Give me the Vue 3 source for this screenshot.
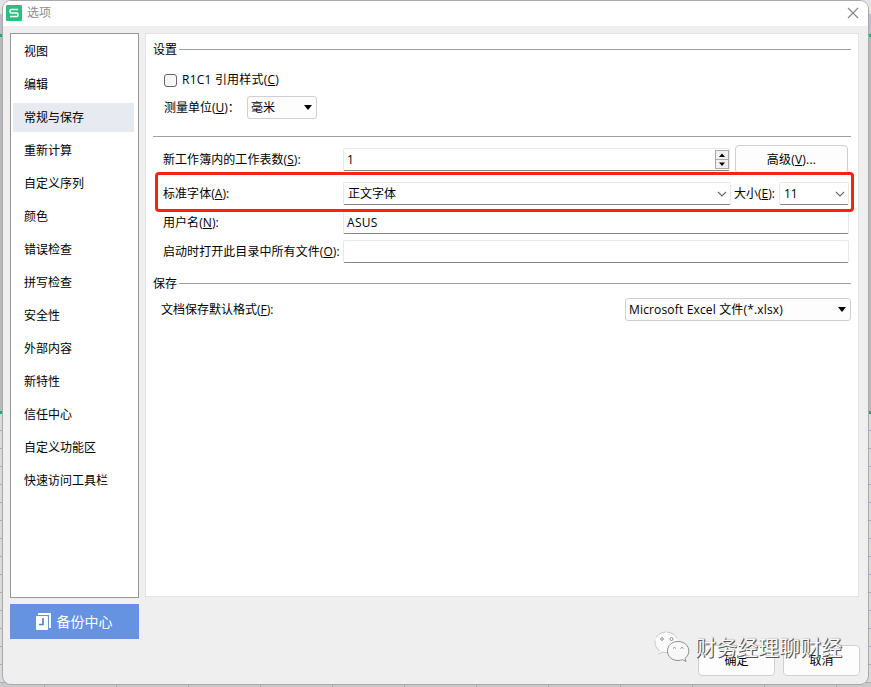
<template>
  <div class="desktop">
    <div class="sheet-bottom"></div>
    <section class="dialog">
      <header class="title-bar">
        <svg class="logo" viewBox="0 0 16 16" width="16" height="16">
          <rect width="16" height="16" rx="1" fill="#2bbf80" />
          <path d="M12 4.5H5.2Q4 4.5 4 5.7V7Q4 8 5.2 8H10.8Q12 8 12 9.2V10.3Q12 11.5 10.8 11.5H4" fill="none" stroke="#fff" stroke-width="1.4" />
        </svg>
        <h1>选项</h1>
        <svg class="close" viewBox="0 0 12 12" width="12" height="12">
          <path d="M1 1L11 11M11 1L1 11" stroke="#858585" stroke-width="1.1" />
        </svg>
      </header>

      <div class="body">
        <aside class="side">
          <ul class="menu">
            <li
              v-for="item in menu"
              :key="item"
              :class="{ active: item === current }"
              @click="current = item"
            >{{ item }}</li>
          </ul>
          <button class="backup">
            <svg viewBox="0 0 16 18" width="16" height="18">
              <path d="M2 1H14V15" fill="none" stroke="#fff" stroke-width="2" />
              <rect x="0" y="3" width="12" height="14" rx="1" fill="#fff" />
              <path d="M7 5V11.500H3" fill="none" stroke="#4f7fd3" stroke-width="1.600" />
            </svg>
            <span>备份中心</span>
          </button>
        </aside>

        <main class="panel">
          <div class="legend first">设置</div>
          <label class="row check-row">
            <input v-model="r1c1" type="checkbox" />
            <span class="r1c1">R1C1 引用样式(<u>C</u>)</span>
          </label>
          <div class="row unit-row">
            <span class="unit-label">测量单位(<u>U</u>)：</span>
            <div class="select unit">毫米<i class="triangle"></i></div>
          </div>
          <div class="separator"></div>

          <div class="row sheets-row">
            <span class="label">新工作簿内的工作表数(<u>S</u>):</span>
            <div class="field sheets">
              <span>1</span>
              <div class="spinner">
                <svg viewBox="0 0 12 8" width="12" height="8"><path d="M3 6L6 2.500L9 6Z" /></svg>
                <svg viewBox="0 0 12 8" width="12" height="8"><path d="M3 2.500L6 6L9 2.500Z" /></svg>
              </div>
            </div>
            <button class="advanced">高级(<u>V</u>)...</button>
          </div>
          <div class="row font-row">
            <span class="label">标准字体(<u>A</u>):</span>
            <div class="field font">
              <span>正文字体</span>
              <svg class="chevron" viewBox="0 0 10 6" width="10" height="6"><path d="M1 1L5 5L9 1" /></svg>
            </div>
            <span class="size-label">大小(<u>E</u>):</span>
            <div class="field size">
              <span>11</span>
              <svg class="chevron" viewBox="0 0 10 6" width="10" height="6"><path d="M1 1L5 5L9 1" /></svg>
            </div>
            <div class="highlight"></div>
          </div>
          <div class="row text-row">
            <span class="label">用户名(<u>N</u>):</span>
            <div class="field wide"><span class="user">ASUS</span></div>
          </div>
          <div class="row text-row">
            <span class="label">启动时打开此目录中所有文件(<u>O</u>):</span>
            <div class="field wide"></div>
          </div>

          <div class="legend second">保存</div>
          <div class="row format-row">
            <span>文档保存默认格式(<u>F</u>):</span>
            <div class="select format"><span>Microsoft Excel 文件(*.xlsx)</span><i class="triangle"></i></div>
          </div>
        </main>
      </div>

      <footer class="actions">
        <button>确定</button>
        <button>取消</button>
      </footer>
    </section>

    <div class="watermark">
      <svg viewBox="0 0 36 32" width="36" height="32">
        <path d="M12 1C5.5 1 1 5.5 1 11C1 14.500 2.800 17.500 5.500 19.500L4.500 23L8.500 21C10 21.500 11.500 21.500 13 21.500C19.500 21.500 24 17 24 11.500C24 5.500 18.500 1 12 1Z" fill="#fafafa" stroke="#aaa" stroke-width=".6" stroke-dasharray="12 3" />
        <path d="M24 10.500C18 10.500 13.500 14.500 13.500 20C13.500 25.500 18 29.500 24 29.500C25.500 29.500 27 29.200 28.500 28.600L32 30.500L31 27.200C33.500 25.500 34.800 23 34.800 20C34.800 14.500 30 10.500 24 10.500Z" fill="#f8f8f8" stroke="#777" stroke-width=".8" />
        <g fill="#fff" stroke="#777" stroke-width=".8">
          <circle cx="8" cy="8" r="1.300" />
          <circle cx="17.500" cy="8" r="1.500" />
          <path d="M19 17.500Q20.500 15.200 22 17.500M26.500 17.500Q28 15.200 29.500 17.500" />
        </g>
      </svg>
      <span>财务经理聊财经</span>
    </div>
  </div>
</template>

<script setup>
import { ref } from 'vue'

const menu = [
  '视图',
  '编辑',
  '常规与保存',
  '重新计算',
  '自定义序列',
  '颜色',
  '错误检查',
  '拼写检查',
  '安全性',
  '外部内容',
  '新特性',
  '信任中心',
  '自定义功能区',
  '快速访问工具栏'
]

const current = ref('常规与保存')
const r1c1 = ref(false)
</script>

<style>
body {
  margin: 0;
  overflow: hidden;
}
</style>

<style scoped>
* {
  box-sizing: border-box;
}
.desktop {
  position: relative;
  width: 871px;
  height: 687px;
  padding: 1px 3px 0;
  overflow: hidden;
  font: 12px/18px "Open Sans", "Noto Sans CJK SC", sans-serif;
  color: #000;
  white-space: nowrap;
  background:
    linear-gradient(#e4e4e4 0 14px, #b9bdc5 14px 34px, #21a675 34px 37px, #b9b9b9 37px 411px, #21a675 411px 414px, transparent 414px),
    repeating-linear-gradient(#d9d9d9 0 16px, #a9b0c5 16px 17px, #d9d9d9 17px 18px) 0 414px;
}
.sheet-bottom {
  position: absolute;
  left: 0;
  right: 0;
  bottom: 0;
  height: 4px;
  background: repeating-linear-gradient(90deg, #c9c9c9 0 71px, #a3a9b8 71px 72px) -27px 0;
}
.dialog {
  position: relative;
  height: 683px;
  background: #efefef;
  border-radius: 8px;
  box-shadow: 0 0 0 1px #aaa;
  overflow: hidden;
}
button {
  padding: 0;
  font: inherit;
  color: inherit;
}
u {
  text-underline-offset: 1px;
  text-decoration-thickness: 1px;
}
.title-bar {
  display: flex;
  align-items: center;
  height: 25px;
  padding: 0 9px 1px 3px;
  background: #fff;
}
.title-bar h1 {
  margin: 0 auto 0 5px;
  font-size: 12px;
  font-weight: 400;
  color: #8c8c8c;
}
.body {
  display: flex;
  gap: 6px;
  padding: 7px 9px 0 7px;
}
.side {
  width: 129px;
}
.menu {
  height: 565px;
  margin: 0 0 6px;
  padding: 3px 2px 2px;
  list-style: none;
  background: #fff;
  border: 1px solid #979797;
}
.menu li {
  height: 29px;
  margin-bottom: 4px;
  padding-left: 11px;
  width: 121px;
  line-height: 29px;
  cursor: default;
}
.menu li.active {
  background: #e7eaf0;
}
.backup {
  display: flex;
  align-items: center;
  justify-content: center;
  gap: 5px;
  width: 129px;
  height: 35px;
  padding-right: 1px;
  border: 0;
  background: #6593e1;
  color: #fff;
  font-size: 14px;
}
.panel {
  width: 714px;
  height: 564px;
  padding: 0 7px;
  background: #fff;
  border: 1px solid #e3e3e3;
}
.legend {
  display: flex;
  align-items: center;
  gap: 2px;
}
.legend::after {
  content: "";
  flex: 1;
  height: 1px;
  background: #a0a0a0;
}
.legend.first {
  height: 31px;
}
.legend.second {
  height: 29px;
  margin-top: 6px;
}
.row {
  display: flex;
  align-items: center;
}
.check-row {
  height: 30px;
  padding-left: 11px;
}
.check-row input {
  appearance: none;
  width: 13px;
  height: 13px;
  margin: 0 5px 0 0;
  border: 1px solid #666;
  border-radius: 3px;
  background: #f6f6f6;
}
.r1c1 {
  letter-spacing: 0.22px;
}
.unit-row {
  height: 25px;
  padding-left: 11px;
}
.unit-label {
  width: 83px;
}
.select {
  display: flex;
  align-items: center;
  justify-content: space-between;
  height: 23px;
  padding: 0 4px 0 3px;
  border: 1px solid #d0d0d0;
  border-radius: 3px;
  background: #fdfdfd;
}
.unit {
  width: 70px;
}
.triangle {
  border: 4px solid transparent;
  border-top: 5px solid #000;
  border-bottom: 0;
}
.separator {
  height: 17px;
  border-bottom: 1px solid #a0a0a0;
}
.label {
  width: 180px;
  flex: none;
  letter-spacing: 0.06px;
}
.field {
  display: flex;
  align-items: center;
  justify-content: space-between;
  height: 23px;
  padding-left: 3px;
  border: 1px solid #e8e8e8;
  border-bottom-color: #858585;
  border-radius: 2px;
}
.sheets-row {
  height: 45px;
  padding-left: 10px;
}
.sheets {
  width: 387px;
}
.spinner {
  display: flex;
  flex-direction: column;
  width: 14px;
  height: 19px;
  border: 1px solid #aaa;
  background: #f0f0f0;
}
.spinner svg + svg {
  border-top: 1px solid #aaa;
  height: 9px;
}
.advanced {
  width: 113px;
  height: 29px;
  margin-left: 5px;
  border: 1px solid #d0d0d0;
  border-radius: 4px;
  background: #fdfdfd;
  letter-spacing: 0.2px;
}
.font-row {
  position: relative;
  height: 23px;
  padding-left: 10px;
}
.font {
  width: 388px;
  padding-left: 4px;
  padding-right: 3px;
}
.size-label {
  width: 48px;
  padding-left: 3px;
}
.size {
  width: 70px;
  padding: 0 3px 0 4px;
}
.chevron path {
  fill: none;
  stroke: #666;
  stroke-width: 1.1;
}
/* marker frame around the default font settings */
.highlight {
  position: absolute;
  left: 2px;
  top: -10px;
  width: 699px;
  height: 40px;
  border: 3px solid #fb2113;
  border-radius: 4px;
}
.text-row {
  height: 23px;
  margin-top: 6px;
  padding-left: 10px;
}
.user {
  letter-spacing: 0.3px;
}
.wide {
  width: 506px;
}
.format-row {
  height: 23px;
  justify-content: space-between;
  padding-left: 8px;
}
.format {
  width: 226px;
  letter-spacing: 0.16px;
}
.actions {
  display: flex;
  justify-content: flex-end;
  gap: 8px;
  padding: 6px 8px 0 0;
}
.actions button {
  width: 77px;
  height: 31px;
  border: 1px solid #d0d0d0;
  border-radius: 4px;
  background: #fdfdfd;
}
.watermark {
  position: absolute;
  left: 654px;
  top: 630px;
  display: flex;
  align-items: center;
  gap: 5px;
  font-size: 21px;
  line-height: 34px;
  color: #f8f8f8;
  text-shadow: 1px 1px 0 #555, 1px 0 1px #777;
}
</style>
